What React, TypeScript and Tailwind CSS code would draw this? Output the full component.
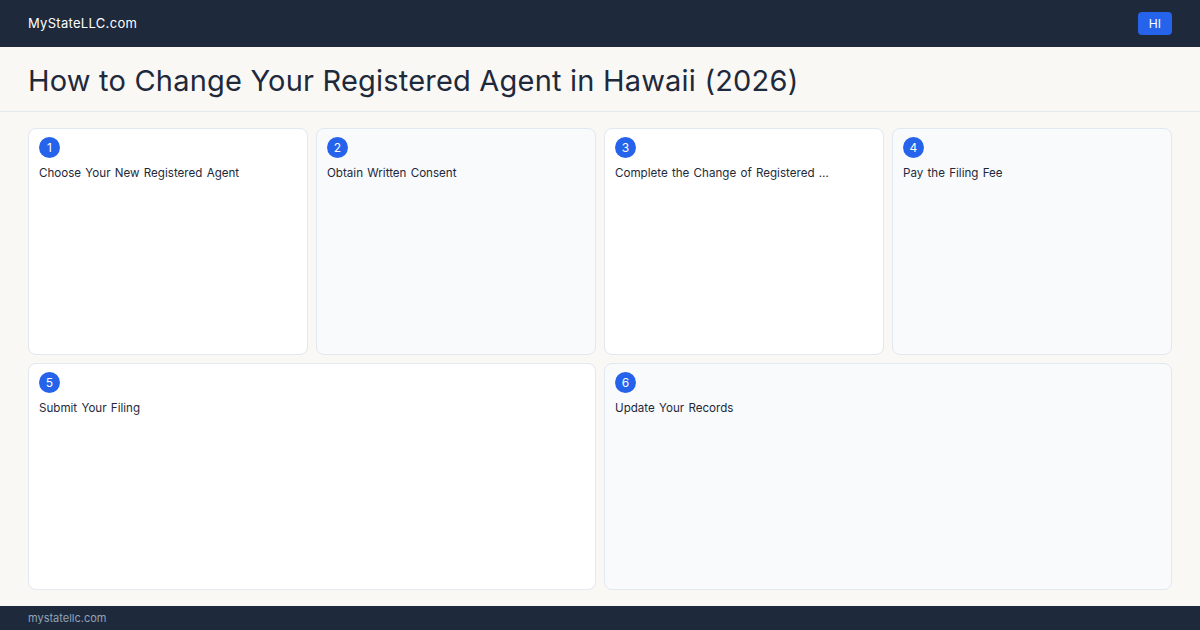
const steps = [
  "Choose Your New Registered Agent",
  "Obtain Written Consent",
  "Complete the Change of Registered …",
  "Pay the Filing Fee",
  "Submit Your Filing",
  "Update Your Records",
];

const StepCard = ({ n, title, wide }: { n: number; title: string; wide?: boolean }) => (
  <div
    className={`${wide ? "col-span-2" : ""} ${
      n % 2 === 0 ? "bg-[#f8fafc]" : "bg-white"
    } border border-[#e2e8f0] rounded-lg px-[10px] py-[8px] min-w-0`}
  >
    <div className="w-[21px] h-[21px] rounded-full bg-[#2563eb] text-white text-[12px] flex items-center justify-center">
      {n}
    </div>
    <p className="mt-[7px] text-[11.6px] text-[#1e293b] [word-spacing:1px] truncate">{title}</p>
  </div>
);

export default function App() {
  return (
    <div
      className="w-[1200px] h-[630px] flex flex-col bg-[#f9f8f5] overflow-hidden"
      style={{ fontFamily: "Inter, 'Noto Sans', sans-serif" }}
    >
      {/* top bar */}
      <header className="h-[47px] shrink-0 bg-[#1e293b] flex items-center justify-between px-[28px]">
        <span className="text-white text-[13px] tracking-[0.3px]">MyStateLLC.com</span>
        <span className="bg-[#2563eb] text-white text-[12px] rounded-[4px] px-[11px] h-[23px] flex items-center">
          HI
        </span>
      </header>

      {/* title */}
      <div className="h-[65px] shrink-0 border-b border-[#e2e8f0] flex items-center px-[28px] pt-[4px]">
        <h1 className="text-[29px] text-[#1e293b] tracking-[0.2px]">
          How to Change Your Registered Agent in Hawaii (2026)
        </h1>
      </div>

      {/* steps */}
      <main className="flex-1 px-[28px] py-[16px] grid grid-cols-4 grid-rows-2 gap-[8px] min-h-0">
        {steps.map((s, i) => (
          <StepCard key={i} n={i + 1} title={s} wide={i >= 4} />
        ))}
      </main>

      <footer className="h-[24px] shrink-0 bg-[#1e293b] flex items-center px-[28px]">
        <span className="text-[#94a3b8] text-[11px]">mystatellc.com</span>
      </footer>
    </div>
  );
}
